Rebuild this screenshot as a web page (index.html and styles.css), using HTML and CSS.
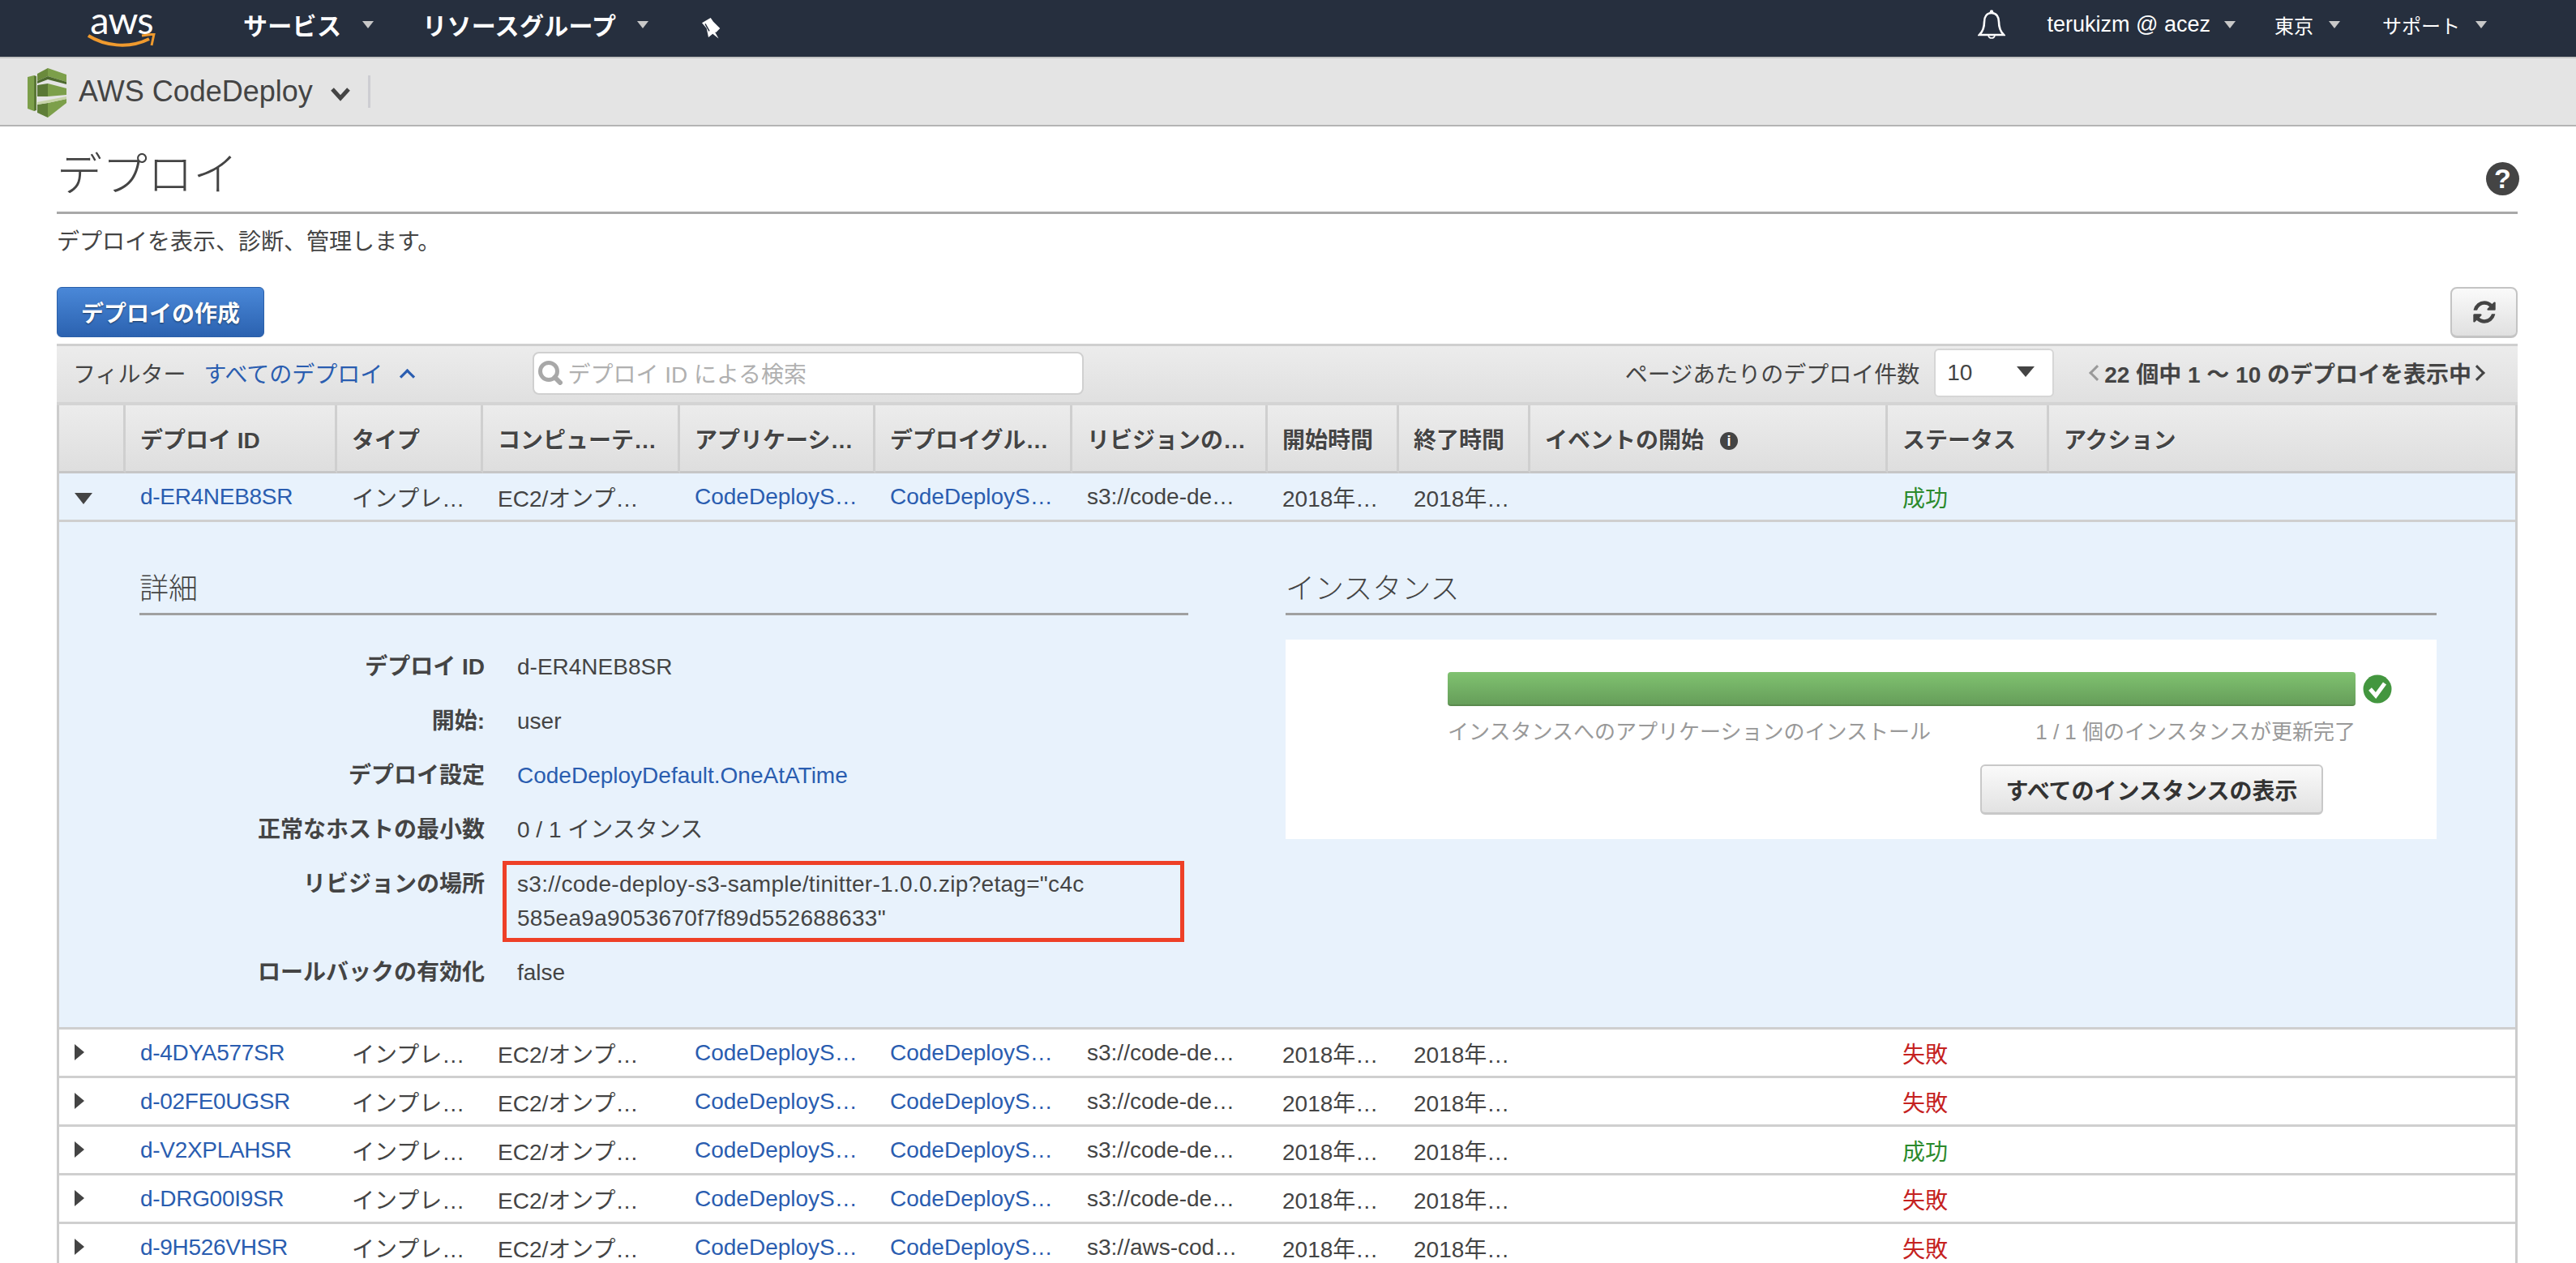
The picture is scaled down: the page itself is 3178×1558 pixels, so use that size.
FILE: index.html
```html
<!DOCTYPE html>
<html lang="ja">
<head>
  <meta charset="UTF-8">
  <title>AWS CodeDeploy</title>
  <link rel="stylesheet" href="styles.css">
</head>
<body>
  <nav class="topbar">
    <div class="logo">
      <span class="logo-text">aws</span>
      <svg class="logo-smile" viewBox="0 0 84 20" width="84" height="20">
        <path d="M1 3 C20 15 50 20 76 7" fill="none" stroke="#ef9a2e" stroke-width="4"/>
        <path d="M67 3 L82 1 L79 15" fill="none" stroke="#ef9a2e" stroke-width="3"/>
      </svg>
    </div>
    <a class="top-item bold services">サービス<i class="caret"></i></a>
    <a class="top-item bold groups">リソースグループ<i class="caret"></i></a>
    <svg class="pin" viewBox="0 0 23 26" width="23" height="26">
      <path d="M0 6.3 L10.7 0 L14 4.7 L22.3 13 L17.3 18 L16 17.5 L20.5 25.5 L13.3 19.7 L8 24 L5.7 13 Z" fill="#fff"/>
      <path d="M4 7.3 L9 16.3" stroke="#262f3e" stroke-width="1.5"/>
    </svg>
    <div class="top-right">
      <svg class="bell" viewBox="0 0 34 36" width="34" height="36">
        <circle cx="17" cy="2.5" r="2.2" fill="#fff"/>
        <path d="M17 4 C11 4 8 9 8 15 C8 22 6 27 2 31 L32 31 C28 27 26 22 26 15 C26 9 23 4 17 4 Z" fill="none" stroke="#fff" stroke-width="2.6"/>
        <path d="M13 32 C14 36 20 36 21 32" fill="none" stroke="#fff" stroke-width="1.6"/>
      </svg>
      <a class="top-item user">terukizm @ acez<i class="caret"></i></a>
      <a class="top-item">東京<i class="caret"></i></a>
      <a class="top-item">サポート<i class="caret"></i></a>
    </div>
  </nav>

  <div class="subbar">
    <svg class="service-icon" viewBox="0 0 48 61" width="48" height="61">
      <polygon points="0,11 8,9 8,53 0,50" fill="#7c9f4a"/>
      <polygon points="8,9 11,10 11,52 8,53" fill="#5a7835"/>
      <polygon points="12,7 25,0 25,10 12,16" fill="#6a8a3c"/>
      <polygon points="25,0 48,8 48,17 25,10" fill="#7c9f4a"/>
      <polygon points="12,16 25,10 48,17 48,20 25,14 12,19" fill="#4d6a2e"/>
      <polygon points="12,21 25,19 25,35 12,35" fill="#5a7835"/>
      <polygon points="25,19 48,25 48,33 25,35" fill="#7c9f4a"/>
      <polygon points="12,45 25,43 25,61 12,55" fill="#5f7e38"/>
      <polygon points="25,43 48,38 48,43 25,61" fill="#7c9f4a"/>
      <polygon points="12,42 48,35 48,38 25,43 12,45" fill="#c7d4a8"/>
    </svg>
    <span class="service-name">AWS CodeDeploy</span>
    <svg class="service-caret" viewBox="0 0 26 18" width="26" height="18">
      <path d="M3 3 L13 14 L23 3" fill="none" stroke="#444" stroke-width="5"/>
    </svg>
    <span class="subbar-sep"></span>
  </div>

  <main class="content">
    <header class="page-head">
      <h1>デプロイ</h1>
      <span class="help">?</span>
    </header>
    <p class="lead">デプロイを表示、診断、管理します。</p>

    <div class="actions">
      <button class="btn-primary">デプロイの作成</button>
      <button class="btn-refresh" aria-label="更新">
        <svg viewBox="0 0 1792 1792" width="32" height="32">
          <path d="M1639 1056q0 5-1 7-64 268-268 434.5t-478 166.5q-146 0-282.5-55t-243.5-157l-129 129q-19 19-45 19t-45-19-19-45v-448q0-26 19-45t45-19h448q26 0 45 19t19 45-19 45l-137 137q71 66 161 102t187 36q134 0 250-65t186-179q11-17 53-117 8-23 30-23h192q13 0 22.5 9.5t9.5 22.5zm25-800v448q0 26-19 45t-45 19h-448q-26 0-45-19t-19-45 19-45l138-138q-148-137-349-137-134 0-250 65t-186 179q-11 17-53 117-8 23-30 23h-199q-13 0-22.5-9.5t-9.5-22.5v-7q65-268 270-434.5t480-166.5q146 0 284 55.5t245 156.5l130-129q19-19 45-19t45 19 19 45z" fill="#444"/>
        </svg>
      </button>
    </div>

    <div class="filterbar">
      <span class="filter-label">フィルター</span>
      <a class="link filter-value">すべてのデプロイ</a>
      <i class="filter-caret"></i>
      <div class="search">
        <svg viewBox="0 0 30 30" width="30" height="30">
          <circle cx="13" cy="13" r="10.5" fill="none" stroke="#a8a8a8" stroke-width="5"/>
          <path d="M20.5 20.5 L27 27" stroke="#a8a8a8" stroke-width="6" stroke-linecap="round"/>
        </svg>
        <span>デプロイ ID による検索</span>
      </div>
      <div class="pager-wrap">
        <span class="per-page">ページあたりのデプロイ件数</span>
        <div class="select"><span>10</span><i class="select-caret"></i></div>
        <i class="chev chev-left"></i>
        <b class="pager">22 個中 1 ～ 10 のデプロイを表示中</b>
        <i class="chev chev-right"></i>
      </div>
    </div>

    <table class="deploys">
      <colgroup>
        <col class="c-arrow"><col class="c-id"><col class="c-type"><col class="c-platform"><col class="c-app"><col class="c-group"><col class="c-rev"><col class="c-time"><col class="c-time"><col class="c-event"><col class="c-status"><col>
      </colgroup>
      <thead>
        <tr>
          <th></th><th>デプロイ ID</th><th>タイプ</th><th>コンピューテ…</th><th>アプリケーシ…</th><th>デプロイグル…</th><th>リビジョンの…</th><th>開始時間</th><th>終了時間</th>
          <th>イベントの開始<span class="info">i</span></th><th>ステータス</th><th>アクション</th>
        </tr>
      </thead>
      <tbody>
        <tr class="open">
          <td><i class="arrow-down"></i></td><td><a class="link">d-ER4NEB8SR</a></td><td>インプレ…</td><td>EC2/オンプ…</td><td><a class="link">CodeDeployS…</a></td><td><a class="link">CodeDeployS…</a></td><td>s3://code-de…</td><td>2018年…</td><td>2018年…</td><td></td><td class="ok">成功</td><td></td>
        </tr>
        <tr class="detail-row">
          <td colspan="12">
            <div class="detail">
              <section class="detail-left">
                <h2>詳細</h2>
                <dl class="props">
                  <dt>デプロイ ID</dt><dd>d-ER4NEB8SR</dd>
                  <dt>開始:</dt><dd>user</dd>
                  <dt>デプロイ設定</dt><dd><a class="link">CodeDeployDefault.OneAtATime</a></dd>
                  <dt>正常なホストの最小数</dt><dd>0 / 1 インスタンス</dd>
                  <dt>リビジョンの場所</dt><dd class="marked">s3://code-deploy-s3-sample/tinitter-1.0.0.zip?etag="c4c<br>585ea9a9053670f7f89d552688633"</dd>
                  <dt>ロールバックの有効化</dt><dd>false</dd>
                </dl>
              </section>
              <section class="detail-right">
                <h2>インスタンス</h2>
                <div class="instance-box">
                  <div class="progress-line">
                    <div class="progress"></div>
                    <svg class="check" viewBox="0 0 36 36" width="36" height="36">
                      <circle cx="18" cy="18" r="17.5" fill="#43963f"/>
                      <path d="M9 18 L16 26 L27 11" fill="none" stroke="#fff" stroke-width="5"/>
                    </svg>
                  </div>
                  <div class="progress-text">
                    <span>インスタンスへのアプリケーションのインストール</span>
                    <span>1 / 1 個のインスタンスが更新完了</span>
                  </div>
                  <button class="btn-default">すべてのインスタンスの表示</button>
                </div>
              </section>
            </div>
          </td>
        </tr>
        <tr>
          <td><i class="arrow-right"></i></td><td><a class="link">d-4DYA577SR</a></td><td>インプレ…</td><td>EC2/オンプ…</td><td><a class="link">CodeDeployS…</a></td><td><a class="link">CodeDeployS…</a></td><td>s3://code-de…</td><td>2018年…</td><td>2018年…</td><td></td><td class="ng">失敗</td><td></td>
        </tr>
        <tr>
          <td><i class="arrow-right"></i></td><td><a class="link">d-02FE0UGSR</a></td><td>インプレ…</td><td>EC2/オンプ…</td><td><a class="link">CodeDeployS…</a></td><td><a class="link">CodeDeployS…</a></td><td>s3://code-de…</td><td>2018年…</td><td>2018年…</td><td></td><td class="ng">失敗</td><td></td>
        </tr>
        <tr>
          <td><i class="arrow-right"></i></td><td><a class="link">d-V2XPLAHSR</a></td><td>インプレ…</td><td>EC2/オンプ…</td><td><a class="link">CodeDeployS…</a></td><td><a class="link">CodeDeployS…</a></td><td>s3://code-de…</td><td>2018年…</td><td>2018年…</td><td></td><td class="ok">成功</td><td></td>
        </tr>
        <tr>
          <td><i class="arrow-right"></i></td><td><a class="link">d-DRG00I9SR</a></td><td>インプレ…</td><td>EC2/オンプ…</td><td><a class="link">CodeDeployS…</a></td><td><a class="link">CodeDeployS…</a></td><td>s3://code-de…</td><td>2018年…</td><td>2018年…</td><td></td><td class="ng">失敗</td><td></td>
        </tr>
        <tr>
          <td><i class="arrow-right"></i></td><td><a class="link">d-9H526VHSR</a></td><td>インプレ…</td><td>EC2/オンプ…</td><td><a class="link">CodeDeployS…</a></td><td><a class="link">CodeDeployS…</a></td><td>s3://aws-cod…</td><td>2018年…</td><td>2018年…</td><td></td><td class="ng">失敗</td><td></td>
        </tr>
      </tbody>
    </table>
  </main>
</body>
</html>
```

FILE: styles.css
```css
html, body {
  height: 1558px;
  overflow: hidden;
}
body {
  margin: 0;
  background: #fff;
  color: #444;
  font-family: "Liberation Sans", "Noto Sans CJK JP", sans-serif;
  font-size: 28px;
}
i {
  display: inline-block;
}
.link {
  color: #2a5db0;
}

/* top nav */
.topbar {
  display: flex;
  align-items: center;
  height: 70px;
  padding-bottom: 10px;
  box-sizing: border-box;
  background: #262f3e;
  color: #fff;
}
.logo {
  width: 84px;
  height: 56px;
  margin-left: 108px;
  margin-top: 8px;
}
.logo-text {
  display: block;
  font-family: Lato, sans-serif;
  font-size: 47px;
  line-height: 36px;
  text-align: center;
  letter-spacing: -1px;
}
.logo-smile {
  display: block;
  margin-top: -1px;
}
.top-item {
  display: flex;
  align-items: center;
  font-size: 24px;
}
.top-item.user {
  margin-right: -4px;
  font-size: 27px;
}
.user .caret {
  margin-left: 17px;
}
.top-item.bold {
  font-size: 30px;
  font-weight: bold;
  letter-spacing: 0.3px;
}
.services {
  margin-left: 108px;
}
.groups {
  margin-left: 60px;
}
.caret {
  width: 0;
  height: 0;
  margin-left: 19px;
  border-left: 7px solid transparent;
  border-right: 7px solid transparent;
  border-top: 9px solid #c8c8c8;
}
.bold .caret {
  margin-left: 26px;
}
.pin {
  margin-left: 66px;
  margin-top: 10px;
}
.top-right {
  display: flex;
  align-items: center;
  gap: 52px;
  margin-left: auto;
  margin-right: 110px;
}

/* service bar */
.subbar {
  display: flex;
  align-items: center;
  height: 86px;
  padding-left: 34px;
  box-sizing: border-box;
  background: #e4e4e4;
  border-top: 2px solid #c4c4c4;
  border-bottom: 2px solid #b4b4b4;
}
.service-icon {
  margin-top: 2px;
}
.service-name {
  margin-left: 15px;
  font-size: 36px;
}
.service-caret {
  margin-left: 21px;
  margin-top: 6px;
}
.subbar-sep {
  width: 3px;
  height: 40px;
  margin-left: 21px;
  background: #cdcdd2;
}

/* page */
.content {
  padding: 0 72px 0 70px;
}
.page-head {
  display: flex;
  align-items: center;
  justify-content: space-between;
  height: 108px;
  padding-top: 24px;
  box-sizing: border-box;
  border-bottom: 3px solid #a8a8a8;
}
h1 {
  margin: -10px 0 0;
  font-size: 56px;
  font-weight: 300;
  line-height: 70px;
}
.help {
  width: 41px;
  height: 41px;
  margin-right: -2px;
  border-radius: 50%;
  background: #444;
  color: #fff;
  font-size: 34px;
  font-weight: bold;
  line-height: 41px;
  text-align: center;
}
.lead {
  margin: 14px 0 0;
  line-height: 42px;
  font-size: 28px;
}
.actions {
  display: flex;
  justify-content: space-between;
  height: 63px;
  margin-top: 34px;
}
.btn-primary {
  width: 256px;
  height: 62px;
  padding: 0;
  border: 1px solid #2a5fa8;
  border-radius: 6px;
  background: linear-gradient(#4a88d8, #2b62b0);
  color: #fff;
  font: bold 28px "Liberation Sans", "Noto Sans CJK JP", sans-serif;
  text-shadow: 0 1px 2px rgba(0, 0, 0, 0.5);
}
.btn-refresh {
  display: flex;
  align-items: center;
  justify-content: center;
  width: 83px;
  height: 63px;
  padding: 0;
  border: 2px solid #c4c4c4;
  border-bottom-width: 3px;
  border-radius: 8px;
  background: linear-gradient(#fafafa, #e0e0e0);
}

/* filter bar */
.filterbar {
  display: flex;
  align-items: center;
  height: 76px;
  box-sizing: border-box;
  margin-top: 7px;
  padding-left: 20px;
  padding-bottom: 3px;
  background: linear-gradient(#ececec, #e0e0e0);
  border-top: 3px solid #cfcfcf;
  border-bottom: 4px solid #d4d4d4;
}
.filter-value {
  margin-left: 22px;
}
.filter-caret {
  width: 13px;
  height: 13px;
  margin: 8px 0 0 22px;
  border-left: 4px solid #2a5db0;
  border-top: 4px solid #2a5db0;
  transform: rotate(45deg) scale(0.8);
}
.search {
  display: flex;
  align-items: center;
  gap: 6px;
  width: 680px;
  height: 53px;
  margin-left: 146px;
  padding-left: 5px;
  box-sizing: border-box;
  background: #fff;
  border: 2px solid #d0d0d0;
  border-radius: 8px;
  color: #b0b0b0;
  overflow: hidden;
}
.pager-wrap {
  display: flex;
  align-items: center;
  margin-left: auto;
  margin-right: 43px;
}
.select {
  display: flex;
  align-items: center;
  justify-content: space-between;
  width: 148px;
  height: 60px;
  margin: 0 0 0 18px;
  padding: 0 22px 0 14px;
  box-sizing: border-box;
  background: #fff;
  border: 2px solid #d6d6d6;
  border-radius: 6px;
}
.select-caret {
  width: 0;
  height: 0;
  border-left: 11px solid transparent;
  border-right: 11px solid transparent;
  border-top: 13px solid #444;
  margin-top: -4px;
}
.chev {
  width: 11px;
  height: 11px;
  border-left: 3px solid #999;
  border-bottom: 3px solid #999;
  transform: rotate(45deg);
}
.chev-left {
  margin-left: 46px;
  margin-right: 2px;
}
.chev-right {
  margin-left: 0;
  border-color: #444;
  transform: rotate(225deg);
}
.pager {
  font-size: 28px;
}

/* table */
.deploys {
  width: 100%;
  table-layout: fixed;
  border-collapse: separate;
  border-spacing: 0;
  border-left: 3px solid #ccc;
  border-right: 3px solid #ccc;
}
.c-arrow { width: 82px; }
.c-id { width: 261px; }
.c-type { width: 180px; }
.c-platform { width: 243px; }
.c-app { width: 241px; }
.c-group { width: 243px; }
.c-rev { width: 241px; }
.c-time { width: 162px; }
.c-event { width: 441px; }
.c-status { width: 199px; }
th {
  height: 84px;
  padding: 0 4px 0 18px;
  box-sizing: border-box;
  background: linear-gradient(#ececec, #dedede);
  border-right: 3px solid #cfcfcf;
  border-bottom: 3px solid #c6c6c6;
  font-weight: bold;
  text-align: left;
  text-shadow: 0 1px 1px #fff;
  white-space: nowrap;
}
th:last-child {
  border-right: 0;
}
td {
  height: 60px;
  padding: 0 2px 0 18px;
  box-sizing: border-box;
  border-bottom: 3px solid #cfcfcf;
  white-space: nowrap;
}
td:nth-child(2) {
  letter-spacing: -0.3px;
}
.open td,
.detail-row td {
  background: #e8f2fc;
}
.ok { color: #2c8a2c; }
.ng { color: #c5221f; }
.info {
  display: inline-block;
  width: 22px;
  height: 22px;
  margin-left: 20px;
  border-radius: 50%;
  background: #444;
  color: #fff;
  font-size: 18px;
  line-height: 22px;
  text-align: center;
  text-shadow: none;
  vertical-align: 3px;
}
.arrow-down {
  width: 0;
  height: 0;
  border-left: 11px solid transparent;
  border-right: 11px solid transparent;
  border-top: 14px solid #444;
}
.arrow-right {
  width: 0;
  height: 0;
  border-top: 10px solid transparent;
  border-bottom: 10px solid transparent;
  border-left: 12px solid #444;
}
tr td:first-child {
  padding-left: 19px;
}

/* expanded row */
.detail-row td,
tr.detail-row td:first-child {
  height: 626px;
  padding: 0 97px 0 99px;
  vertical-align: top;
  white-space: normal;
  letter-spacing: 0;
}
.detail {
  display: flex;
  justify-content: space-between;
}
.detail-left {
  width: 1294px;
}
.detail-right {
  width: 1420px;
}
h2 {
  height: 115px;
  margin: 0;
  padding-top: 59px;
  box-sizing: border-box;
  border-bottom: 3px solid #a0a0a0;
  font-size: 36px;
  font-weight: 300;
  line-height: 48px;
}
.props {
  display: grid;
  grid-template-columns: 426px 1fr;
  column-gap: 40px;
  row-gap: 25px;
  margin: 43px 0 0;
  line-height: 42px;
}
dt {
  font-weight: bold;
  text-align: right;
}
dd {
  margin: 0;
}
.marked {
  width: 841px;
  margin: -8px 0 -8px -18px;
  padding: 3px 13px;
  box-sizing: border-box;
  border: 5px solid #ee4027;
  letter-spacing: 0.3px;
}
.instance-box {
  height: 246px;
  margin-top: 30px;
  padding: 40px 55px 0 200px;
  box-sizing: border-box;
  background: #fff;
}
.progress-line {
  display: flex;
  align-items: center;
  gap: 9px;
}
.progress {
  flex: 1;
  height: 42px;
  box-sizing: border-box;
  border-radius: 4px;
  border-bottom: 2px solid #5a8a4e;
  background: linear-gradient(#80c270, #669e5a);
}
.progress-text {
  display: flex;
  justify-content: space-between;
  margin: 14px 45px 0 0;
  line-height: 36px;
  font-size: 26px;
  color: #999;
}
.btn-default {
  display: block;
  width: 423px;
  height: 62px;
  margin: 22px 0 0 657px;
  padding: 0;
  border: 2px solid #c8c8c8;
  border-bottom-width: 3px;
  border-radius: 6px;
  background: linear-gradient(#fafafa, #e2e2e2);
  color: #333;
  font: bold 28px "Liberation Sans", "Noto Sans CJK JP", sans-serif;
}
```
